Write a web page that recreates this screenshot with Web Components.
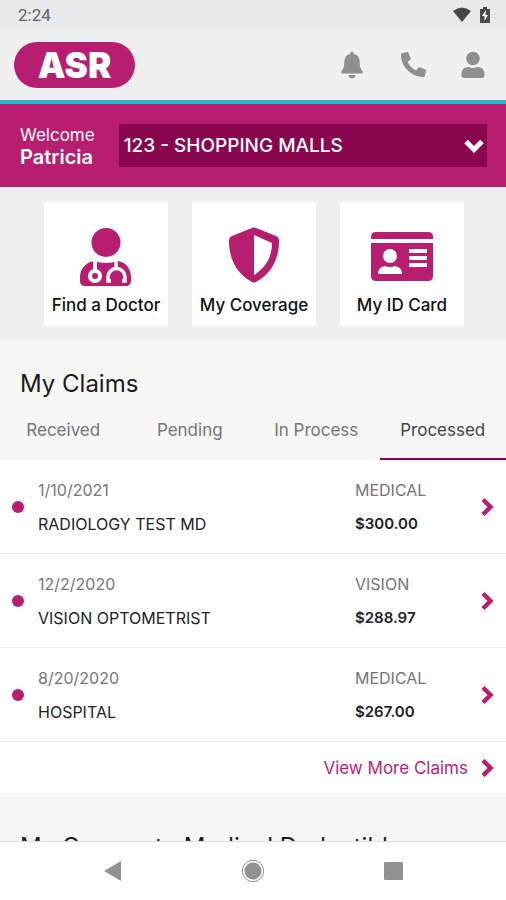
<!DOCTYPE html>
<html lang="en">
<head>
<meta charset="UTF-8">
<meta name="viewport" content="width=device-width, initial-scale=1">
<title>ASR</title>
<style>
    html, body { height: 100%; }
    body {
        margin: 0;
        font-family: "Inter", "Liberation Sans", sans-serif;
        color: #1c1c1c;
        --brand: #b81e70;
        --brand-dark: #8a064f;
        --muted: #757575;
    }
</style>
</head>
<body>
<member-app></member-app>

<script>
const define = (name, html, setup) => {
    customElements.define(name, class extends HTMLElement {
        constructor() {
            super();
            this.attachShadow({ mode: "open" });
            this.shadowRoot.innerHTML = html;
        }
        connectedCallback() {
            if (setup) setup(this, this.shadowRoot);
        }
    });
};

const chevron = `<svg width="14" height="20" viewBox="0 0 14 20" aria-hidden="true"><path d="M3 2.500l7.500 7.500L3 17.500" fill="none" stroke="#b81e70" stroke-width="4.500"/></svg>`;

define("status-bar", `
    <style>
        :host { display: flex; flex: none; align-items: center; justify-content: space-between; height: 30px; padding: 0 16px 0 18px; background: #e8e9ed; color: #606164; font: 17px/20px Roboto, sans-serif; }
        div { display: flex; align-items: center; gap: 8px; }
        svg { display: block; }
    </style>
    <span>2:24</span>
    <div>
        <svg width="20" height="16" viewBox="0 0 20 16" fill="#48494b"><path d="M1 4Q10-3 19 4L10 15Z"/></svg>
        <svg width="10" height="16" viewBox="0 0 10 16"><path d="M3 0h4v2h3v14H0V2h3z" fill="#48494b"/><path d="M6 3L2 9h2.500v5L8 8H5.500z" fill="#fff"/></svg>
    </div>
`);

define("app-header", `
    <style>
        :host { display: flex; flex: none; align-items: center; justify-content: space-between; height: 70px; padding: 0 20px 0 14px; background: #efefef; border-bottom: 4px solid #25b7d0; }
        .logo { display: flex; align-items: center; justify-content: center; width: 121px; height: 46px; border-radius: 23px; background: var(--brand); color: #fff; font-size: 35px; line-height: 46px; font-weight: 900; text-decoration: none; }
        nav { display: flex; gap: 33px; }
        button { display: block; padding: 0; border: 0; background: none; cursor: pointer; }
        svg { display: block; fill: #8f8f8d; }
    </style>
    <a class="logo" href="#">ASR</a>
    <nav>
        <button aria-label="Notifications"><svg width="28" height="28" viewBox="0 0 28 28"><path d="M14 0.500c1 0 1.700.7 1.700 1.600v.8c4 .8 6 4 6 8 0 5.500 1.300 7.600 2.800 9.200.8.900.3 2.400-1.100 2.400H4.600c-1.400 0-1.900-1.500-1.100-2.400 1.500-1.600 2.800-3.700 2.800-9.200 0-4 2-7.200 6-8v-.8c0-.9.700-1.600 1.700-1.600zM10.700 24h6.600a3.300 3.300 0 0 1-6.600 0z"/></svg></button>
        <button aria-label="Call us"><svg width="28" height="28" viewBox="0 0 28 28"><path d="M3 2.300l5-1.200c.6-.1 1.200.2 1.400.7l2.300 5.400c.2.500.1 1.100-.3 1.400L8.600 11a18 18 0 0 0 8.500 8.500l2.400-2.900c.3-.4.900-.5 1.400-.3l5.400 2.300c.5.200.8.800.7 1.400l-1.200 5c-.1.600-.6 1-1.200 1C12.300 26 2 15.800 2 3.500c0-.6.400-1.100 1-1.200z"/></svg></button>
        <button aria-label="Profile"><svg width="26" height="28" viewBox="0 0 26 28"><circle cx="13" cy="7.500" r="6.800"/><path d="M8 16h1q4 1.800 8 0h1c3.900 0 6.500 3 6.500 6.800v1.700c0 1.400-1 2.500-2.500 2.500H4c-1.500 0-2.500-1.100-2.500-2.500v-1.700C1.500 19 4.100 16 8 16z"/></svg></button>
    </nav>
`);

define("welcome-banner", `
    <style>
        :host { display: flex; flex: none; align-items: center; gap: 24px; box-sizing: border-box; height: 83px; padding: 0 19px 0 20px; background: var(--brand); color: #fff; font-size: 17px; line-height: 22px; }
        b { display: block; font-size: 20px; font-weight: 600; }
        .pick { position: relative; flex: 1; }
        select { display: block; appearance: none; width: 100%; height: 43px; margin: 0; padding: 0 40px 0 5px; border: 0; border-radius: 0; background: var(--brand-dark); color: #fff; font: 500 19px/24px Inter, sans-serif; }
        svg { position: absolute; right: 2px; top: 14px; pointer-events: none; }
    </style>
    <label for="group">Welcome <b>Patricia</b></label>
    <div class="pick">
        <select id="group"><option>123 - SHOPPING MALLS</option></select>
        <svg width="22" height="16" viewBox="0 0 22 16"><path d="M3 3.500l8 8 8-8" fill="none" stroke="#fff" stroke-width="5"/></svg>
    </div>
`);

define("quick-link", `
    <style>
        :host { display: block; flex: 0 1 124px; }
        a { display: flex; flex-direction: column; align-items: center; justify-content: flex-end; gap: 6px; box-sizing: border-box; height: 124px; padding-bottom: 10px; background: #fff; color: #111; font-size: 17px; line-height: 22px; font-weight: 500; text-decoration: none; white-space: nowrap; }
    </style>
    <a href="#"><slot name="icon"></slot><span><slot></slot></span></a>
`);

define("claim-tabs", `
    <style>
        :host { display: grid; grid-template-columns: repeat(4, 1fr); }
        button { height: 60px; padding: 2px 0 0; border: 0; border-bottom: 2px solid transparent; background: none; color: var(--muted); font: 17px/20px Inter, sans-serif; cursor: pointer; }
        button[aria-selected="true"] { border-color: var(--brand-dark); color: #444; }
    </style>
    <button role="tab">Received</button>
    <button role="tab">Pending</button>
    <button role="tab">In Process</button>
    <button role="tab" aria-selected="true">Processed</button>
`, (host, root) => {
    host.setAttribute("role", "tablist");
    const tabs = root.querySelectorAll("button");
    tabs.forEach((tab) => tab.addEventListener("click", () => {
        tabs.forEach((t) => t.setAttribute("aria-selected", t === tab));
    }));
});

define("claim-row", `
    <style>
        :host { display: block; border-bottom: 1px solid #ececec; background: #fff; }
        a { display: grid; grid-template-columns: 12px 1fr 111px 14px; align-items: center; column-gap: 14px; height: 93px; padding: 0 12px; color: #222; font-size: 16px; line-height: 20px; text-decoration: none; }
        i { width: 12px; height: 12px; border-radius: 50%; background: var(--brand); }
        div { display: grid; row-gap: 14px; }
        .top { color: var(--muted); }
        b { font-size: 15px; font-weight: 600; }
        svg { display: block; }
    </style>
    <a href="#">
        <i></i>
        <div><span class="top" id="date"></span><span id="provider"></span></div>
        <div><span class="top" id="kind"></span><b id="amount"></b></div>
        ${chevron}
    </a>
`, (host, root) => {
    ["date", "provider", "kind", "amount"].forEach((key) => {
        root.getElementById(key).textContent = host.getAttribute(key);
    });
});

define("nav-bar", `
    <style>
        :host { display: flex; flex: none; align-items: center; justify-content: center; gap: 116px; height: 58px; border-top: 1px solid #dcdedd; background: #fff; }
        button { display: block; padding: 0; border: 0; background: none; }
        svg { display: block; fill: #929292; }
    </style>
    <button aria-label="Back"><svg width="24" height="24" viewBox="0 0 24 24"><path d="M3 12L20 2v20z"/></svg></button>
    <button aria-label="Home"><svg width="24" height="24" viewBox="0 0 24 24"><circle cx="12" cy="12" r="8.500"/><circle cx="12" cy="12" r="10.700" style="fill:none;stroke:#929292"/></svg></button>
    <button aria-label="Recents"><svg width="24" height="24" viewBox="0 0 24 24"><rect x="3" y="3" width="19" height="18" rx="1"/></svg></button>
`);

define("member-app", `
    <style>
        :host { display: flex; flex-direction: column; height: 100vh; overflow: hidden; }
        main { flex: 1; min-height: 0; overflow: hidden; background: #f6f6f5; }
        .links { display: flex; justify-content: center; gap: 24px; padding: 15px 15px 14px 17px; background: #efefef; }
        .links svg { fill: #b81e70; }
        h2 { margin: 0; padding: 0 20px; font-size: 24px; line-height: 32px; font-weight: 400; }
        .claims h2 { padding-top: 28px; }
        .more { display: flex; align-items: center; justify-content: flex-end; gap: 12px; height: 51px; padding-right: 12px; background: #fff; color: var(--brand); font-size: 17px; line-height: 20px; text-decoration: none; }
        .next h2 { padding-top: 38px; white-space: nowrap; }
    </style>
    <status-bar></status-bar>
    <app-header></app-header>
    <welcome-banner></welcome-banner>
    <main>
        <div class="links">
            <quick-link>
                <svg slot="icon" width="54" height="64" viewBox="0 0 54 64">
                    <circle cx="27" cy="18.500" r="14.500"/>
                    <path d="M15 37q12 4 24 0c8 1 13 8 13 16v4c0 3-2 5-5 5H6c-3 0-5-2-5-5v-4c0-8 6-15 14-16z"/>
                    <g fill="none" stroke="#fff"><path d="M16 36v12" stroke-width="4"/><circle cx="16" cy="52" r="5" stroke-width="4"/><path d="M37 35v10M32 57h-3v-4a8.500 8.500 0 0 1 17 0v4h-3" stroke-width="3.500"/></g>
                </svg>Find a Doctor
            </quick-link>
            <quick-link>
                <svg slot="icon" width="54" height="64" viewBox="0 0 54 64">
                    <path fill-rule="evenodd" d="M25 4q2-1 4 0l20 8q3 1 3 5c0 21-10 34-23 41q-2 1-4 0C12 51 2 38 2 17q0-4 3-5zM27 11v40c11-7 18-17 18-32z"/>
                </svg>My Coverage
            </quick-link>
            <quick-link>
                <svg slot="icon" width="64" height="56" viewBox="0 0 64 56">
                    <path d="M1 6V4q0-5 5-5h52q5 0 5 5v2zM1 10h62v33q0 5-5 5H6q-5 0-5-5z" transform="translate(0 1)"/>
                    <g fill="#fff"><circle cx="20" cy="24" r="7"/><path d="M8 42q0-7 7-8 5 2 10 0 7 1 7 8zM39 17h18v4H39zM39 24h18v4H39zM39 31h18v4H39z"/></g>
                </svg>My ID Card
            </quick-link>
        </div>
        <section class="claims">
            <h2>My Claims</h2>
            <claim-tabs></claim-tabs>
            <claim-row date="1/10/2021" provider="RADIOLOGY TEST MD" kind="MEDICAL" amount="$300.00"></claim-row>
            <claim-row date="12/2/2020" provider="VISION OPTOMETRIST" kind="VISION" amount="$288.97"></claim-row>
            <claim-row date="8/20/2020" provider="HOSPITAL" kind="MEDICAL" amount="$267.00"></claim-row>
            <a class="more" href="#">View More Claims ${chevron}</a>
        </section>
        <section class="next"><h2>My Copays to Medical Deductible</h2></section>
    </main>
    <nav-bar></nav-bar>
`);
</script>
</body>
</html>
